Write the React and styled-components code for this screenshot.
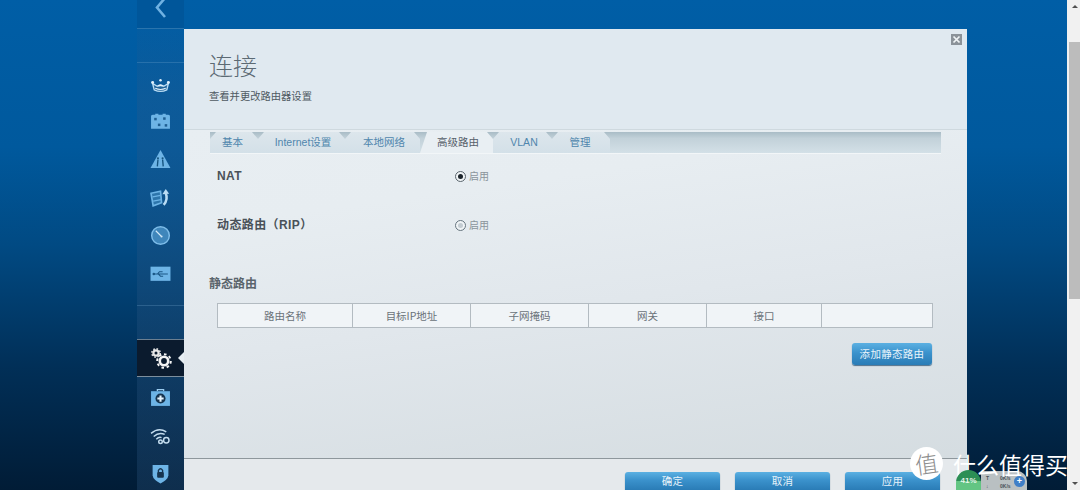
import React from 'react'
import styled, { createGlobalStyle } from 'styled-components'

const GlobalStyle = createGlobalStyle`
  html, body { margin: 0; padding: 0; height: 490px; overflow: hidden; }
  body { font-family: "Liberation Sans", "Noto Sans CJK SC", sans-serif; }
`

const Page = styled.div`
  position: relative;
  width: 1080px;
  height: 490px;
  display: flex;
  overflow: hidden;
`
const Stage = styled.div`
  flex: 1;
  display: flex;
  padding-left: 137px;
  background: linear-gradient(180deg, #005ea6 0%, #00599d 30%, #014a83 50%, #012f57 75%, #011c36 100%);
`
const Sidebar = styled.nav`
  width: 47px;
  flex: none;
  display: flex;
  flex-direction: column;
  background: linear-gradient(180deg, rgba(10, 90, 150, 0) 0%, rgba(40, 90, 140, .32) 20%, rgba(40, 80, 120, .35) 100%);
`
const BackRow = styled.div`
  height: 29px;
  flex: none;
  display: flex;
  align-items: flex-start;
  justify-content: center;
  background: #00569a;
  border-bottom: 1px solid #2a74ad;
  box-sizing: border-box;
`
const Spacer = styled.div`
  height: ${p => p.$h}px;
  flex: none;
  border-bottom: ${p => (p.$line ? '1px solid rgba(120,170,210,.28)' : 'none')};
  box-sizing: border-box;
`
const NavItem = styled.div`
  position: relative;
  height: ${p => p.$h || 38}px;
  flex: none;
  display: flex;
  align-items: center;
  justify-content: center;
  box-sizing: border-box;
  background: ${p => (p.$active ? '#0b1b2e' : 'transparent')};
  border-top: ${p => (p.$active ? '1px solid #6c7f90' : 'none')};
  border-bottom: ${p => (p.$active ? '1px solid #7d8e9d' : 'none')};
`
const Pointer = styled.span`
  position: absolute;
  right: 0;
  top: 12px;
  border: 6px solid transparent;
  border-right: 6px solid #e6edf2;
  border-left: 0;
`
const Panel = styled.main`
  width: 783px;
  flex: none;
  margin-top: 29px;
  height: 461px;
  display: flex;
  flex-direction: column;
  border-top-right-radius: 2px;
  background: linear-gradient(172deg, #e9eff3 0%, #e7edf1 35%, #e1e7ec 58%, #d3dbdf 100%);
`
const Header = styled.header`
  height: 101px;
  flex: none;
  box-sizing: border-box;
  padding: 19px 25px 0;
  background: #e0e9f0;
  border-bottom: 1px solid #cfd9df;
  display: flex;
  justify-content: space-between;
  align-items: flex-start;
`
const Title = styled.h1`
  margin: 0;
  font: 300 24px/34px "Noto Sans CJK SC", sans-serif;
  color: #5c6a74;
`
const Subtitle = styled.p`
  margin: 6px 0 0;
  font: 400 10.3px/16px "Noto Sans CJK SC", sans-serif;
  color: #4f5a62;
`
const CloseButton = styled.button`
  width: 11px;
  height: 11px;
  margin: -14px -20px 0 0;
  padding: 0;
  border: 0;
  background: #8b9299;
  color: #f0f4f6;
  display: flex;
  align-items: center;
  justify-content: center;
`
const Content = styled.section`
  flex: 1;
  padding: 2px 34px 0 25px;
`
const TabStrip = styled.div`
  height: 21px;
  margin-left: 1px;
  width: 731px;
  display: flex;
  background: linear-gradient(180deg, #a9bcc6 0%, #c2d1d9 30%, #d3e0e7 100%);
  border-bottom: 1px solid #f2f6f8;
`
const Tab = styled.div`
  width: ${p => p.$w}px;
  height: 21px;
  flex: none;
  display: flex;
  align-items: center;
  justify-content: center;
  box-sizing: border-box;
  padding: 0 ${p => (p.$nudge < 0 ? -p.$nudge * 2 : 0)}px 1px ${p => (p.$nudge > 0 ? p.$nudge * 2 : 0)}px;
  clip-path: ${p =>
    p.$active
      ? 'polygon(0 100%, 7px 0, calc(100% - 6px) 0, 100% 7px, 100% 100%)'
      : 'polygon(0 100%, 0 7px, 6px 0, calc(100% - 6px) 0, 100% 7px, 100% 100%)'};
  font: 400 10.5px/14px "Liberation Sans", "Noto Sans CJK SC", sans-serif;
  color: ${p => (p.$active ? '#56606a' : '#4f86ad')};
  background: ${p => (p.$active ? '#e9eff3' : 'linear-gradient(180deg, #dde6ec, #d3e0e8)')};
`
const FormRow = styled.div`
  height: 44px;
  margin-top: ${p => p.$mt || 0}px;
  margin-left: 8px;
  display: grid;
  grid-template-columns: 238px auto;
  align-items: center;
`
const FieldLabel = styled.div`
  font: 700 12px/16px "Liberation Sans", "Noto Sans CJK SC", sans-serif;
  letter-spacing: .4px;
  color: #4a5259;
`
const RadioWrap = styled.label`
  display: flex;
  align-items: center;
  gap: 3px;
  font: 400 10px/14px "Noto Sans CJK SC", sans-serif;
  color: #8a949b;
`
const RadioDot = styled.span`
  width: 11px;
  height: 11px;
  box-sizing: border-box;
  border-radius: 50%;
  border: 1px solid ${p => (p.$on ? '#59646c' : '#66757f')};
  background: #f0f4f6;
  display: flex;
  align-items: center;
  justify-content: center;
  &::after {
    content: '';
    width: 5px;
    height: 5px;
    border-radius: 50%;
    background: ${p => (p.$on ? '#1b242b' : '#c3ccd2')};
  }
`
const SectionTitle = styled.h2`
  margin: 28px 0 12px;
  font: 700 12px/16px "Noto Sans CJK SC", sans-serif;
  color: #5a646b;
`
const RouteTable = styled.div`
  margin-left: 8px;
  width: 716px;
  height: 25px;
  box-sizing: border-box;
  display: grid;
  grid-template-columns: 135px 118px 118px 118px 115px 1fr;
  border: 1px solid #b3bbc1;
  background: #f0f4f7;
`
const HeadCell = styled.div`
  display: flex;
  align-items: center;
  justify-content: center;
  font: 400 10.5px/14px "Noto Sans CJK SC", sans-serif;
  color: #6a7279;
  border-right: ${p => (p.$last ? 'none' : '1px solid #b3bbc1')};
`
const ButtonRow = styled.div`
  display: flex;
  justify-content: flex-end;
  width: 723px;
  margin: 15px 0 0;
`
const BlueButton = styled.button`
  width: ${p => p.$w}px;
  height: ${p => p.$h}px;
  padding: 0;
  border: 0;
  border-radius: ${p => (p.$cut ? '3px 3px 0 0' : '3px')};
  flex: none;
  background: linear-gradient(180deg, #5bb0e2 0%, #3b92cc 45%, #2a7cb6 100%);
  box-shadow: 0 1px 1px #50708a;
  font: 400 10.5px/14px "Noto Sans CJK SC", sans-serif;
  letter-spacing: .3px;
  color: #e8f3fa;
`
const Footer = styled.footer`
  height: 32px;
  flex: none;
  box-sizing: border-box;
  border-top: 1px solid #8e979c;
  background: #e5e9ec;
  padding: 13px 27px 0 0;
  display: flex;
  justify-content: flex-end;
  gap: 15px;
  overflow: hidden;
`
const Scrollbar = styled.div`
  width: 13px;
  flex: none;
  background: #f1f1f1;
  display: flex;
  flex-direction: column;
  align-items: flex-end;
  justify-content: space-between;
`
const Arrow = styled.div`
  width: 11px;
  height: 13px;
  display: flex;
  align-items: center;
  justify-content: center;
  &::after {
    content: '';
    border-left: 3px solid transparent;
    border-right: 3px solid transparent;
    ${p => (p.$down ? 'border-top: 3px solid #505050;' : 'border-bottom: 3px solid #505050;')}
  }
`
const Thumb = styled.div`
  width: 11px;
  height: 257px;
  margin: 29px 0 auto;
  background: #bcbcbc;
`
// zdm watermark and the little speed widget lie on top of the page
const Watermark = styled.div`
  position: absolute;
  left: 910px;
  top: 447px;
  display: flex;
  align-items: center;
  gap: 10px;
`
const MarkCircle = styled.span`
  width: 33px;
  height: 33px;
  border-radius: 50%;
  background: #fff;
  display: flex;
  align-items: center;
  justify-content: center;
  font: 300 23px/1 "Noto Sans CJK SC", sans-serif;
  color: #8d8d8d;
  & > span { transform: rotate(-8deg); }
`
const MarkText = styled.span`
  font: 400 23px/22px "Noto Sans CJK SC", sans-serif;
  color: #fff;
`
const SpeedWidget = styled.div`
  position: absolute;
  left: 956px;
  top: 470px;
  display: flex;
  align-items: flex-start;
`
const SpeedBall = styled.span`
  width: 25px;
  height: 20px;
  box-sizing: border-box;
  padding-top: 7px;
  border-radius: 13px 13px 0 0;
  background: linear-gradient(180deg, #2c8f55 0 55%, #63c583 55% 100%);
  font: 700 8px/8px "Liberation Sans", sans-serif;
  color: #e6f5ea;
  text-align: center;
  position: relative;
  z-index: 1;
`
const SpeedPill = styled.span`
  width: 46px;
  height: 19px;
  margin-top: 1px;
  border-radius: 0 10px 0 0;
  background: #b9c0c2;
  display: grid;
  grid-template-columns: 14px 14px 11px;
  align-items: end;
  padding-left: 5px;
  box-sizing: border-box;
  font: 700 5px/8px "Liberation Sans", sans-serif;
  color: #4a5257;
`
const SpeedDot = styled.span`
  width: 11px;
  height: 11px;
  margin-bottom: 3px;
  border-radius: 50%;
  background: #3f7fc7;
  color: #fff;
  font: 700 9px/11px "Liberation Sans", sans-serif;
  text-align: center;
`

const ICON = '#6db4e6'
const PALE = '#b9dcf4'

const Glyph = ({ children, size = 21 }) => (
  <svg width={size} height={size} viewBox="0 0 20 20">{children}</svg>
)

const icons = [
  // router
  <Glyph key="router">
    <g transform="translate(0 2)">
      <path d="M2.5 8 L4 14 Q10 17 16 14 L17.5 8 L13.5 10.5 Q10 9.4 6.5 10.5 Z" fill="#1f639a" stroke={PALE} strokeWidth="1.3" />
      <path d="M6.5 11 Q10 6.5 13.5 11 Q10 9.8 6.5 11 Z" fill="#dff0fb" />
      <path d="M5 12.5 Q10 14.8 15 12.5" fill="none" stroke="#dff0fb" strokeWidth="1" />
      <circle cx="10" cy="5" r="1.2" fill="#dff0fb" />
      <circle cx="2.5" cy="7" r="1.4" fill="#dff0fb" />
      <circle cx="17.5" cy="7" r="1.4" fill="#dff0fb" />
    </g>
  </Glyph>,
  // devices case
  <Glyph key="case">
    <path d="M1 5 Q1 3.6 3 3.6 H5 V2.6 H8 V3.6 H12 V2.6 H15 V3.6 H17 Q19 3.6 19 5 V17 H1 Z" fill={ICON} />
    <rect x="4" y="6.5" width="2.4" height="2.4" fill="#1f5f93" />
    <rect x="12.5" y="6" width="2.4" height="2.4" fill="#1f5f93" />
    <rect x="7.5" y="12" width="2.4" height="2.4" fill="#1f5f93" />
    <rect x="14" y="12.5" width="2.4" height="2.4" fill="#1f5f93" />
  </Glyph>,
  // triangle with two people
  <Glyph key="warn">
    <path d="M10 1 L19.5 18 H.5 Z" fill={ICON} />
    <path d="M7.6 10 L7 16.5 M12 10 L12.6 16.5" stroke="#14537f" strokeWidth="1.3" />
    <circle cx="7.6" cy="8.8" r="1" fill="#14537f" />
    <circle cx="12" cy="8.8" r="1" fill="#14537f" />
  </Glyph>,
  // film with arrow
  <Glyph key="film">
    <path d="M1 6 L10 4 L11 15 L3 18 Z" fill="#2d75ab" stroke={ICON} strokeWidth="1.6" />
    <path d="M2.5 9.5 L10 8 M3 13.5 L10.5 12" stroke={ICON} strokeWidth="1.2" />
    <path d="M13 17 Q17.5 12 15 6" fill="none" stroke={PALE} strokeWidth="2.4" />
    <path d="M11.8 7 L15 1.8 L18.2 6.5 Z" fill={PALE} />
  </Glyph>,
  // gauge
  <Glyph key="gauge">
    <circle cx="10" cy="10" r="8.4" fill="#3f86bb" stroke="#7dbce9" strokeWidth="1.4" />
    <path d="M5.5 5.5 L10.5 10.5" stroke="#d2e8f7" strokeWidth="1.1" />
    <circle cx="11" cy="11" r="1" fill="#d2e8f7" />
  </Glyph>,
  // usb drive
  <Glyph key="usb">
    <rect x="0.5" y="3.5" width="19" height="13.5" fill={ICON} />
    <path d="M3 10.5 H17 M7 10.5 L9 8.3 H12 M8 10.5 L10 12.6 H12.5" fill="none" stroke="#1a5685" strokeWidth="1" />
    <circle cx="3.6" cy="10.5" r="1.2" fill="#1a5685" />
  </Glyph>,
]

const lowerIcons = [
  // first aid kit
  <Glyph key="aid">
    <path d="M7 4 V2.5 H13 V4" fill="none" stroke="#9ccdf0" strokeWidth="1.2" />
    <rect x="1" y="4" width="18" height="14" fill={ICON} />
    <circle cx="10" cy="11" r="4.8" fill="#16344f" />
    <path d="M10 8 V14 M7 11 H13" stroke="#e4f2fb" strokeWidth="2" />
  </Glyph>,
  // wifi with gears
  <Glyph key="wifi">
    <g fill="none" stroke="#c3dcee" strokeWidth="1.4">
      <path d="M1 8 Q8 2 15.5 6.5" />
      <path d="M3.5 11 Q8.5 6.5 14 9" />
      <path d="M6 13.5 Q8.5 11 11 12" />
      <circle cx="10" cy="16" r="1.7" />
      <circle cx="15.5" cy="14.5" r="2.6" />
    </g>
  </Glyph>,
  // shield with lock
  <Glyph key="shield">
    <path d="M2.5 2 H17.5 V12 Q17 16 10 19.5 Q3 16 2.5 12 Z" fill={ICON} />
    <rect x="6.8" y="8.5" width="6.4" height="5.5" rx="1" fill="#16344f" />
    <path d="M8 8.5 V7 Q10 4 12 7 V8.5" fill="none" stroke="#16344f" strokeWidth="1.3" />
  </Glyph>,
]

const tabs = [
  { label: '基本', w: 48, nudge: -1.5 },
  { label: 'Internet设置', w: 87, nudge: 1.5 },
  { label: '本地网络', w: 75, nudge: 1.5 },
  { label: '高级路由', w: 73, nudge: 1.5, active: true },
  { label: 'VLAN', w: 59, nudge: 1.5 },
  { label: '管理', w: 58, nudge: -1 },
]

const columns = ['路由名称', '目标IP地址', '子网掩码', '网关', '接口', '']

const App = () => (
  <Page>
    <GlobalStyle />
    <Stage>
      <Sidebar>
        <BackRow>
          <svg width="14" height="20" viewBox="0 0 14 20">
            <path d="M11 -2 L3 7.5 L11 17" fill="none" stroke="#6fb1e2" strokeWidth="2.6" />
          </svg>
        </BackRow>
        <Spacer $h={34} $line />
        <Spacer $h={1} />
        {icons.map((icon, i) => (
          <NavItem key={i}>{icon}</NavItem>
        ))}
        <Spacer $h={14} $line />
        <Spacer $h={33} />
        <NavItem $active $h={38}>
          <svg width="24" height="24" viewBox="0 0 24 24">
            <circle cx="7" cy="7" r="2.6" fill="none" stroke="#e8e8e8" strokeWidth="2.2" />
            <circle cx="7" cy="7" r="4.2" fill="none" stroke="#e8e8e8" strokeWidth="1.5" strokeDasharray="1.6 1.7" />
            <circle cx="15" cy="15" r="4.2" fill="none" stroke="#f4f4f4" strokeWidth="2.6" />
            <circle cx="15" cy="15" r="6.8" fill="none" stroke="#f4f4f4" strokeWidth="2" strokeDasharray="2.6 2.7" />
          </svg>
          <Pointer />
        </NavItem>
        <Spacer $h={1} />
        {lowerIcons.map((icon, i) => (
          <NavItem key={i}>{icon}</NavItem>
        ))}
      </Sidebar>
      <Panel>
        <Header>
          <div>
            <Title>连接</Title>
            <Subtitle>查看并更改路由器设置</Subtitle>
          </div>
          <CloseButton aria-label="关闭">
            <svg width="9" height="9" viewBox="0 0 9 9">
              <path d="M1.5 1.5 L7.5 7.5 M7.5 1.5 L1.5 7.5" stroke="#f0f4f6" strokeWidth="1.7" />
            </svg>
          </CloseButton>
        </Header>
        <Content>
          <TabStrip>
            {tabs.map(t => (
              <Tab key={t.label} $w={t.w} $nudge={t.nudge} $active={t.active}>{t.label}</Tab>
            ))}
          </TabStrip>
          <FormRow>
            <FieldLabel>NAT</FieldLabel>
            <RadioWrap><RadioDot $on />启用</RadioWrap>
          </FormRow>
          <FormRow $mt={5}>
            <FieldLabel>动态路由（RIP）</FieldLabel>
            <RadioWrap><RadioDot />启用</RadioWrap>
          </FormRow>
          <SectionTitle>静态路由</SectionTitle>
          <RouteTable>
            {columns.map((c, i) => (
              <HeadCell key={i} $last={i === columns.length - 1}>{c}</HeadCell>
            ))}
          </RouteTable>
          <ButtonRow>
            <BlueButton $w={80} $h={22}>添加静态路由</BlueButton>
          </ButtonRow>
        </Content>
        <Footer>
          <BlueButton $cut $w={95} $h={18}>确定</BlueButton>
          <BlueButton $cut $w={95} $h={18}>取消</BlueButton>
          <BlueButton $cut $w={95} $h={18}>应用</BlueButton>
        </Footer>
      </Panel>
    </Stage>
    <Scrollbar>
      <Arrow />
      <Thumb />
      <Arrow $down />
    </Scrollbar>
    <SpeedWidget>
      <SpeedBall>41%</SpeedBall>
      <SpeedPill>
        <span>T<br />↓</span>
        <span>0K/s<br />0K/s</span>
        <SpeedDot>+</SpeedDot>
      </SpeedPill>
    </SpeedWidget>
    <Watermark>
      <MarkCircle><span>值</span></MarkCircle>
      <MarkText>什么值得买</MarkText>
    </Watermark>
  </Page>
)

export default App
